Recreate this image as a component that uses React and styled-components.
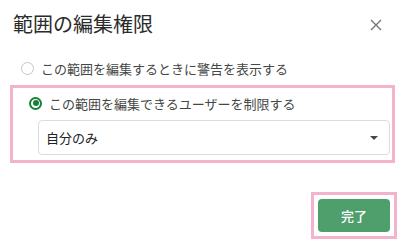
import styled, { createGlobalStyle } from "styled-components";
import { useState } from "react";

const Global = createGlobalStyle`
  html, body {
    margin: 0;
    padding: 0;
    background: #ffffff;
  }
  body {
    font-family: "Roboto", "Noto Sans CJK JP", sans-serif;
    color: #3c4043;
  }
`;

const Dialog = styled.div`
  width: 400px;
  height: 245px;
  box-sizing: border-box;
  padding: 12px 5px 0 10px;
  display: flex;
  flex-direction: column;
`;

const Header = styled.div`
  display: flex;
  align-items: center;
  justify-content: space-between;
  height: 26px;
  padding-left: 3px;
`;

const Title = styled.h1`
  margin: 0;
  font-size: 20px;
  font-weight: 400;
  line-height: 26px;
  color: #2b2b2b;
`;

const Close = styled.button`
  border: 0;
  background: none;
  padding: 0;
  margin-right: 13px;
  width: 12px;
  height: 12px;
  display: flex;
  cursor: pointer;
`;

const Option = styled.label`
  display: flex;
  align-items: center;
  gap: 7px;
  height: 24px;
  padding-left: ${({ $indent }) => $indent}px;
  font-size: 13px;
  color: #444746;
  cursor: pointer;
`;

const Radio = styled.span`
  box-sizing: border-box;
  width: 13px;
  height: 13px;
  border-radius: 50%;
  border: ${({ $checked }) => ($checked ? "2px solid #188038" : "1px solid #c4c7c5")};
  display: flex;
  align-items: center;
  justify-content: center;
  flex-shrink: 0;

  &::after {
    content: "";
    width: 6px;
    height: 6px;
    border-radius: 50%;
    background: #188038;
    display: ${({ $checked }) => ($checked ? "block" : "none")};
  }
`;

const FirstOption = styled.div`
  margin-top: 18px;
`;

const Highlight = styled.div`
  margin-top: 5px;
  border: 3px solid #f3b3cb;
  padding: 3px 2px 5px 8px;
  display: flex;
  flex-direction: column;
  gap: 5px;
  height: 78px;
  box-sizing: border-box;
`;

const Select = styled.div`
  margin-left: 17px;
  height: 35px;
  box-sizing: border-box;
  border: 1px solid #dadce0;
  border-radius: 4px;
  display: flex;
  align-items: center;
  justify-content: space-between;
  padding: 0 11px 0 7px;
  font-size: 13px;
  color: #202124;
`;

const Caret = styled.span`
  width: 0;
  height: 0;
  border-left: 4px solid transparent;
  border-right: 4px solid transparent;
  border-top: 4px solid #444746;
`;

const Footer = styled.div`
  margin-top: 29px;
  display: flex;
  justify-content: flex-end;
  margin-right: -2px;
`;

const Focus = styled.div`
  border: 3px solid #f3b3cb;
  padding: 4px;
`;

const Done = styled.button`
  width: 72px;
  height: 33px;
  border: 0;
  border-radius: 4px;
  background: #4e9f6b;
  color: #ffffff;
  font-family: "Roboto", "Noto Sans CJK JP", sans-serif;
  font-size: 13px;
  font-weight: 500;
  display: block;
  cursor: pointer;
`;

export default function App() {
  const [mode, setMode] = useState("restrict");

  return (
    <>
      <Global />
      <Dialog>
        <Header>
          <Title>範囲の編集権限</Title>
          <Close aria-label="閉じる">
            <svg width="12" height="12" viewBox="0 0 12 12">
              <path d="M1 1 L11 11 M11 1 L1 11" stroke="#6f7276" strokeWidth="1.3" />
            </svg>
          </Close>
        </Header>

        <FirstOption>
          <Option $indent={11} onClick={() => setMode("warn")}>
            <Radio $checked={mode === "warn"} />
            この範囲を編集するときに警告を表示する
          </Option>
        </FirstOption>

        <Highlight>
          <Option $indent={8} onClick={() => setMode("restrict")}>
            <Radio $checked={mode === "restrict"} />
            この範囲を編集できるユーザーを制限する
          </Option>
          <Select>
            自分のみ
            <Caret />
          </Select>
        </Highlight>

        <Footer>
          <Focus>
            <Done>完了</Done>
          </Focus>
        </Footer>
      </Dialog>
    </>
  );
}
